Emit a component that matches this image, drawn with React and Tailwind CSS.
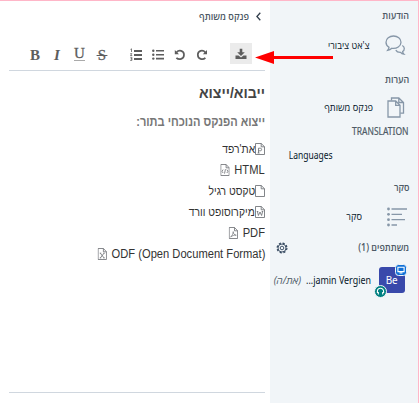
import React from 'react';

const FileIcon = ({ children }) => (
  <svg className="shrink-0" width="10" height="12" viewBox="0 0 10 12" fill="none" stroke="#6d7075" strokeWidth="0.85">
    <path d="M.5.5h5.7l3.3 3.2v7.8h-9z M6.2.5v3.3h3.3" />
    {children}
  </svg>
);

const exportsList = [
  { label: "את'רפד", rtl: true, mark: <path d="M3.5 10V5.2h1.8a1.3 1.3 0 0 1 0 2.6H3.5M2.6 10h2" /> },
  { label: 'HTML', rtl: false, mark: <path d="M3 5.6 1.8 7.3 3 9M7 5.6l1.2 1.7L7 9M5.5 5.2l-1 4.4" /> },
  { label: 'טקסט רגיל', rtl: true, mark: null },
  { label: 'מיקרוסופט וורד', rtl: true, mark: <path d="M1.8 5.5h1.5M6.7 5.5h1.5M2.4 5.5l1 4L5 6l1.6 3.5 1-4" /> },
  { label: 'PDF', rtl: false, mark: <path d="M2 10c1.4-.9 3-3.7 2.8-5.4 0 2.2 1.4 3.5 3.3 3.6-2.2-.2-4.3.4-6.1 1.8z" strokeWidth="0.7" /> },
  { label: 'ODF (Open Document Format)', rtl: false, mark: <path d="M3 5.3l3.8 4.5M6.8 5.3 3 9.8M2.3 5.2h1.6M6 5.2h1.6M2.3 9.9h1.6M6 9.9h1.6" /> },
];

const Toolbar = () => (
  <div className="ml-[9px] flex h-[36px] w-[256px] items-start border-b border-[#d0d7df] pt-[8px] text-[#5d5d5d]">
    <div className="flex h-[22px] items-center pt-[2px] font-['Liberation_Serif',serif] text-[15px] leading-none">
      <b className="ml-[21px] w-[24px]">B</b>
      <i className="w-[20px] font-bold">I</i>
      <span className="-mt-[3px] h-[15px] w-[11px] border-b border-[#aaa] leading-[15px] [-webkit-text-stroke:0.3px]">U</span>
      <span className="ml-[11px] flex w-[12px] justify-center whitespace-pre line-through [-webkit-text-stroke:0.3px]">&#8202;S&#8202;</span>
    </div>
    <svg className="ml-[22px] mt-[5px]" width="12" height="13" viewBox="0 0 12 13">
      <path d="M4 2h8v2H4zM4 6h8v2H4zM4 10h8v2H4z" fill="currentColor" />
      <path d="M.5 1.4l1-.6V4M.3 5.6h1.5L.5 7.5h1.7M.3 9.3h1.6v1.5H.8h1.1v1.6H.2" fill="none" stroke="currentColor" strokeWidth=".8" />
    </svg>
    <svg className="ml-[10px] mt-[5px]" width="12" height="13" viewBox="0 0 12 13" fill="currentColor">
      <path d="M4 2h8v1.6H4zM4 6h8v1.6H4zM4 9.8h8v1.6H4z" />
      <circle cx="1.3" cy="2.7" r="1.2" /><circle cx="1.3" cy="6.7" r="1.2" /><circle cx="1.3" cy="10.6" r="1.2" />
    </svg>
    <svg className="ml-[10px] mt-[6px]" width="12" height="12" viewBox="0 0 12 12" fill="none" stroke="currentColor" strokeWidth="1.7">
      <path d="M2.4 3.5C5 .4 10 1.6 10 5.8c0 4.4-5 5.6-7.6 3" />
      <path d="M.8 1v4.3H5z" fill="currentColor" stroke="none" />
    </svg>
    <svg className="ml-[10px] mt-[6px]" width="12" height="12" viewBox="0 0 12 12" fill="none" stroke="currentColor" strokeWidth="1.7">
      <path d="M9.4 3.5C6.8.4 1.8 1.6 1.8 5.8c0 4.4 5 5.6 7.6 3" />
      <path d="M11 1v4.3H6.8z" fill="currentColor" stroke="none" />
    </svg>
    <div className="ml-[22px] flex h-[21px] w-[22px] items-center justify-center bg-[#ebebeb]">
      <svg width="12" height="12" viewBox="0 0 12 12" fill="currentColor">
        <path d="M4.7.8h2.6v3.5h2.5L6 8 2.2 4.3h2.5z" />
        <path d="M.5 7.5h3L6 9.6l2.5-2.1h3V11H.5z" />
      </svg>
    </div>
  </div>
);

const Notes = () => (
  <main className="flex w-[270px] flex-col bg-white">
    <header dir="rtl" className="flex h-[34px] items-center pb-[3px] pr-[9px]">
      <svg width="5" height="9" viewBox="0 0 5 9" fill="none" stroke="#35414e" strokeWidth="1.3"><path d="M4.3.7.9 4.5l3.4 3.8" /></svg>
      <span className="mr-[7px] origin-right scale-x-[0.91] whitespace-nowrap font-['Open_Sans','Liberation_Sans',sans-serif] text-[10px] font-semibold text-[#4e5a66]">פנקס משותף</span>
    </header>
    <Toolbar />
    <section className="ml-[9px] h-[322px] w-[256px] border-b border-[#d0d7df] font-['Liberation_Sans',sans-serif]">
      <h1 dir="rtl" className="mt-[12px] origin-right scale-x-[0.94] whitespace-nowrap text-[15px] font-bold leading-[20px] text-[#444]">ייבוא/ייצוא</h1>
      <h2 dir="rtl" className="mt-[10px] origin-right scale-x-[0.85] whitespace-nowrap text-[13px] font-bold leading-[18px] text-[#777]">ייצוא הפנקס הנוכחי בתור:</h2>
      <ul className="mt-[7px]">
        {exportsList.map(({ label, mark, rtl }) =>
          rtl ? (
            <li key={label} dir="rtl" className="flex h-[21px] items-center text-[12px] text-[#333]">
              <FileIcon>{mark}</FileIcon>
              <span className="origin-right scale-x-[0.86] whitespace-nowrap">{label}</span>
            </li>
          ) : (
            <li key={label} dir="rtl" className="flex h-[21px] items-center text-[12px] text-[#333]">
              <span dir="ltr" className="flex origin-right scale-x-[0.93] items-center gap-[5px] whitespace-nowrap">
                <FileIcon>{mark}</FileIcon>
                {label}
              </span>
            </li>
          )
        )}
      </ul>
    </section>
  </main>
);

const Title = ({ children }) => (
  <h3 className="flex h-[16px] items-center pr-[9px] text-[10px] font-semibold text-[#4e5a66]">
    <span className="origin-right scale-x-[0.89] whitespace-nowrap">{children}</span>
  </h3>
);

const Sidebar = () => (
  <aside dir="rtl" className="flex w-[148px] flex-col bg-[#f1f5f8] pt-[6px] font-['Open_Sans','Liberation_Sans',sans-serif] text-[#06172a]">
    <Title>הודעות</Title>
    <div className="flex h-[48px] items-center pb-[4px] pr-[12px] text-[10px]">
      <svg width="21" height="21" viewBox="0 0 21 21" fill="none" stroke="#8797a8" strokeWidth="1.3">
        <path d="M8.5 1C4.4 1 1 3.7 1 7.2c0 2.1 1.2 3.9 3 5 0 1.2-.6 2.2-1.4 3.2 1.8-.2 3.2-1 4.2-2.1 5 .8 9.2-2.3 9.2-6.1C16 3.7 12.6 1 8.5 1z" />
        <path d="M17.3 10.5c2.6 1.4 2.6 4.5.3 6 0 1 .5 1.9 1.3 2.7-1.5-.2-2.6-.9-3.3-1.9-2.2.1-4-.7-4.8-2.2" />
      </svg>
      <span className="mr-[15px] origin-right scale-x-[0.91] whitespace-nowrap">צ'אט ציבורי</span>
    </div>
    <Title>הערות</Title>
    <div className="flex h-[40px] items-center pr-[13px] text-[10px]">
      <svg width="18" height="21" viewBox="0 0 18 21" fill="none" stroke="#8797a8" strokeWidth="1.3">
        <path d="M4.5 3.5V1h7.3l4.7 4.5v10.7h-3.2M11.8 1v4.5h4.7" />
        <path d="M1 4h7.7l4.3 4.3V20H1zM8.7 4v4.3H13" />
      </svg>
      <span className="mr-[14px] origin-right scale-x-[0.92] whitespace-nowrap">פנקס משותף</span>
    </div>
    <h3 className="flex h-[8px] items-center pr-[9px] font-['Noto_Sans',sans-serif] text-[10px] text-[#4e5a66]">
      <span className="origin-right scale-x-[0.85] whitespace-nowrap [-webkit-text-stroke:0.2px]">TRANSLATION</span>
    </h3>
    <div className="flex h-[40px] items-center pr-[85px] font-['Noto_Sans',sans-serif] text-[10px]">
      <span className="origin-right scale-x-[0.85] whitespace-nowrap">Languages</span>
    </div>
    <div className="h-[4px]" />
    <Title>סקר</Title>
    <div className="flex h-[44px] items-center pb-px pr-[11px] text-[10px]">
      <svg width="20" height="20" viewBox="0 0 20 20" stroke="#8797a8" strokeWidth="1.3">
        <path d="M4.5 2H20M4.5 7.3H15M4.5 12.7H18M4.5 18H10" />
        <g fill="#8797a8" stroke="none"><circle cx="1.5" cy="2" r="1.4" /><circle cx="1.5" cy="7.3" r="1.4" /><circle cx="1.5" cy="12.7" r="1.4" /><circle cx="1.5" cy="18" r="1.4" /></g>
      </svg>
      <span className="mr-[25px] origin-right scale-x-[0.92] whitespace-nowrap">סקר</span>
    </div>
    <div className="flex h-[17px] items-center justify-between pl-[6px]">
      <Title>משתתפים (1)</Title>
      <svg width="12" height="12" viewBox="0 0 12 12" fill="none" stroke="#32465e">
        <circle cx="6" cy="6" r="4.9" strokeWidth="1.2" strokeDasharray="2.2 1.65" />
        <circle cx="6" cy="6" r="4" strokeWidth=".9" />
        <circle cx="6" cy="6" r="1.8" strokeWidth=".9" />
      </svg>
    </div>
    <div className="mt-[10px] flex h-[28px] items-center pr-[13px]">
      <div className="relative flex h-[26px] w-[26px] shrink-0 items-center justify-center rounded-[3px] bg-[#3949ab] font-['Noto_Sans',sans-serif] text-[11px] text-white">
        <span className="scale-x-90">Be</span>
        <svg className="absolute -right-[2px] -top-[3px]" width="12" height="12" viewBox="0 0 12 12">
          <rect x=".5" y=".5" width="11" height="11" rx="3" fill="#0f70d7" stroke="#f1f5f8" />
          <path d="M2.9 3.3h6.2v4.3H2.9zM4.5 9h3" fill="none" stroke="#fff" strokeWidth="1.1" />
        </svg>
        <svg className="absolute -bottom-[5px] -left-[5px]" width="13" height="13" viewBox="0 0 13 13">
          <circle cx="6.5" cy="6.5" r="6" fill="#008081" stroke="#f1f5f8" />
          <path d="M3.4 7.9V6.4a3.1 3.1 0 0 1 6.2 0v1.5M4.3 6.9v2.6M8.7 6.9v2.6" fill="none" stroke="#fff" strokeWidth="1.1" />
        </svg>
      </div>
      <div dir="ltr" className="mr-[8px] flex items-center whitespace-nowrap font-['Noto_Sans',sans-serif] text-[10px]">
        <i dir="rtl" className="-mr-[3px] font-['Open_Sans','Liberation_Sans',sans-serif] text-[#4e5a66]">(את/ה)</i>
        <span className="origin-right scale-x-[0.89]">...jamin Vergien</span>
      </div>
    </div>
  </aside>
);

export default function App() {
  return (
    <div className="relative flex h-[403px] w-[419px] overflow-hidden border-r border-t border-[#ffb6c8] bg-white">
      <Notes />
      <Sidebar />
      <svg className="absolute left-[255px] top-[50px]" width="78" height="13" viewBox="0 0 78 13" fill="#f00">
        <path d="M0 6.5 19 0v5h59v3H19v5z" />
      </svg>
    </div>
  );
}
